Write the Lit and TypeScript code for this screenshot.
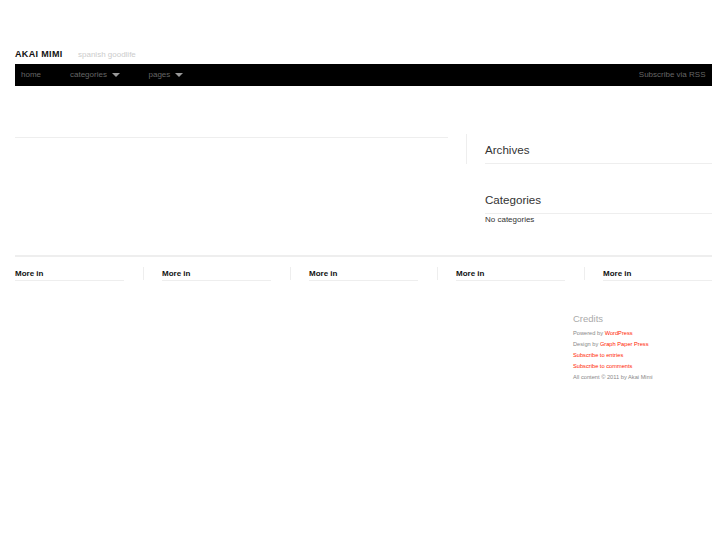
import { LitElement, html, css } from "lit";
import { customElement } from "lit/decorators.js";

@customElement("app-root")
export class AppRoot extends LitElement {
  static styles = css`
    :host { display: block; font-family: "Liberation Sans", Arial, sans-serif; background: #fff; height: 545px; overflow: hidden; color: #333; }
    .page { padding: 48px 15px 0; }
    .masthead { display: flex; align-items: baseline; height: 16px; line-height: 13px; }
    .logo { font-size: 9px; font-weight: bold; color: #111; letter-spacing: 0.35px; width: 63px; }
    .tag { font-size: 8px; color: #ccc; }
    nav { display: flex; align-items: center; background: #000; height: 22px; color: #666; font-size: 8px; padding: 0 6.5px 0 6px; line-height: 20px; }
    .item { display: flex; align-items: center; }
    .home { width: 49px; }
    .cats { width: 78.5px; }
    .arrow { width: 0; height: 0; border-left: 4px solid transparent; border-right: 4px solid transparent; border-top: 4px solid #999; margin-left: 5px; }
    .rss { margin-left: auto; }
    .content { display: flex; height: 169px; border-bottom: 2px solid #eee; }
    .main { width: 433px; padding-top: 51px; }
    .main hr { border: 0; border-top: 1px solid #eee; margin: 0; }
    .side { margin-left: 18px; flex: 1; padding-top: 48px; position: relative; }
    .side::before { content: ""; position: absolute; left: 0; top: 48px; height: 30px; border-left: 1px solid #eee; }
    .widget { margin-left: 19px; }
    h3 { margin: 0; font-weight: normal; font-size: 11.6px; color: #333; line-height: 15px; border-bottom: 1px solid #eee; }
    .w1 h3 { padding: 8px 0 6px; }
    .w2 { margin-top: 28px; }
    .w2 h3 { padding: 0 0 6px; }
    .w2 p { margin: 0; font-size: 8px; line-height: 11px; color: #333; }
    .cols { display: flex; padding-top: 10px; }
    .col { width: 109px; height: 13px; border-bottom: 1px solid #eee; font-size: 8px; font-weight: bold; color: #111; line-height: 14px; }
    .sep { width: 1px; height: 13px; background: #eee; margin: 0 18px 0 19px; }
    .credits { margin: 32px 0 0 558px; font-size: 5.7px; line-height: 11px; color: #888; }
    .credits h4 { margin: 0 0 3px; font-weight: normal; font-size: 9.5px; line-height: 12px; color: #aaa; }
    .credits a { color: #f20; text-decoration: none; }
  `;

  render() {
    const cols = [0, 1, 2, 3, 4];
    return html`<div class="page">
      <div class="masthead"><span class="logo">AKAI MIMI</span><span class="tag">spanish goodlife</span></div>
      <nav>
        <span class="item home">home</span>
        <span class="item cats">categories<i class="arrow"></i></span>
        <span class="item">pages<i class="arrow"></i></span>
        <span class="rss">Subscribe via RSS</span>
      </nav>
      <div class="content">
        <div class="main"><hr /></div>
        <div class="side">
          <div class="widget w1"><h3>Archives</h3></div>
          <div class="widget w2"><h3>Categories</h3><p>No categories</p></div>
        </div>
      </div>
      <div class="cols">
        ${cols.map((i) => html`${i ? html`<span class="sep"></span>` : ""}<div class="col">More in</div>`)}
      </div>
      <div class="credits">
        <h4>Credits</h4>
        <div>Powered by <a>WordPress</a></div>
        <div>Design by <a>Graph Paper Press</a></div>
        <div><a>Subscribe to entries</a></div>
        <div><a>Subscribe to comments</a></div>
        <div>All content © 2011 by Akai Mimi</div>
      </div>
    </div>`;
  }
}
